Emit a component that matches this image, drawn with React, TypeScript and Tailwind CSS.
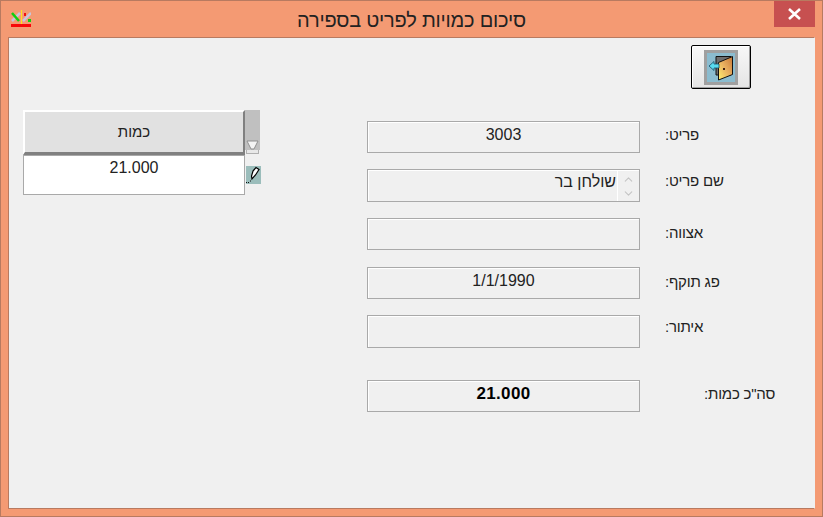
import { ChevronDown, ChevronUp } from 'lucide-react'

function AppIcon() {
  return (
    <svg width="20" height="17" viewBox="0 0 20 17" className="shrink-0">
      <path d="M1 11 L9 3" stroke="#c8c4dc" strokeWidth="2.5" />
      <path d="M1 3 L8 11" stroke="#10d010" strokeWidth="2.5" />
      <path d="M12 11 L20 3" stroke="#c8c4dc" strokeWidth="2.5" />
      <rect x="13" y="3" width="2" height="3" fill="#f01010" />
      <rect x="17" y="9" width="3" height="3" fill="#10d010" />
      <rect x="10" y="0" width="1" height="14" fill="#ffe020" />
      <rect x="0" y="14" width="20" height="3" fill="#f80808" />
    </svg>
  )
}

function DoorIcon() {
  return (
    <svg width="34" height="35" viewBox="0 0 34 35" className="-ml-[1px]">
      <defs>
        <linearGradient id="door" x1="0" y1="1" x2="1" y2="0">
          <stop offset="0" stopColor="#fff070" />
          <stop offset="0.5" stopColor="#e8b060" />
          <stop offset="1" stopColor="#c87838" />
        </linearGradient>
      </defs>
      <rect x="1.5" y="1.5" width="31" height="32" fill="#8bbccf" stroke="#a0a0a0" strokeWidth="3" />
      <path d="M12 6.5 H27 V25 H12 Z" fill="#6e6e6e" stroke="#111" strokeWidth="1" />
      <path d="M14.5 12.5 L28.5 6.5 V24.5 L14.5 30 Z" fill="url(#door)" stroke="#111" strokeWidth="1" />
      <path d="M5 16 L10 11.5 V14 H15 V18 H10 V20.5 Z" fill="#58dcf0" stroke="#14506a" strokeWidth="0.8" />
      <rect x="19" y="18" width="2" height="2" fill="#402010" />
    </svg>
  )
}

function PencilIcon() {
  return (
    <svg width="15" height="18" viewBox="0 0 15 18">
      <rect width="15" height="18" fill="#9bbdbb" />
      <path d="M7 5 L10 1.5 L13 3.5 L9.5 9 L6 13 L5.5 10 Z" fill="#fff" stroke="#000" strokeWidth="1.2" />
      <path d="M0 16.5 H3 M4 15 H5" stroke="#111" strokeWidth="1" strokeDasharray="1 1" />
    </svg>
  )
}

function Field({
  label,
  value,
  bold,
  spinner,
  h = 'h-8',
  labelClass = 'ml-[25px] pt-1',
}: {
  label: string
  value?: string
  bold?: boolean
  spinner?: boolean
  h?: string
  labelClass?: string
}) {
  return (
    <div className="flex items-start">
      <div
        className={`${h} w-[273px] flex border border-[#a9a9a9] shadow-[inset_1px_1px_0_#fff] text-[#222] ${
          bold ? 'font-bold text-black text-[17px] leading-[20px] tracking-[0.35px]' : 'text-[16px] leading-[20px]'
        }`}
      >
        {spinner ? (
          <>
            <div dir="rtl" className="flex-1 text-right pt-[2px] pr-[1px]">
              {value}
            </div>
            <div className="w-[22px] flex flex-col items-center pt-[3px] border-l border-white text-[#c4c4c4]">
              <ChevronUp size={13} strokeWidth={2} />
              <ChevronDown size={13} strokeWidth={2} className="mt-[1px]" />
            </div>
          </>
        ) : (
          <div className="flex-1 text-center pt-[3px]">{value}</div>
        )}
      </div>
      <div dir="rtl" className={`${labelClass} text-[15px] leading-[20px] tracking-[-0.2px] text-[#222] whitespace-nowrap`}>
        {label}
      </div>
    </div>
  )
}

export default function App() {
  return (
    <div className="w-[823px] h-[517px] flex flex-col bg-[#f49a73] border border-[#b87a60] font-['Liberation_Sans',sans-serif]">
      {/* Title bar */}
      <div className="h-[36px] shrink-0 flex items-start relative">
        <div className="pl-[10px] pt-[9px]">
          <AppIcon />
        </div>
        <div dir="rtl" className="absolute left-0 right-0 top-[7px] text-center text-[20px] leading-[24px] text-[#222] tracking-[-0.2px]">
          סיכום כמויות לפריט בספירה
        </div>
        <div className="ml-auto mr-[7px] w-[41px] h-[26px] bg-[#c75050] flex items-center justify-center">
          <svg width="15" height="12" viewBox="0 0 15 12">
            <path d="M2 1 L13 11 M13 1 L2 11" stroke="#fff" strokeWidth="2.6" />
          </svg>
        </div>
      </div>

      {/* Client area */}
      <div className="mx-[7px] h-[472px] bg-[#f0f0f0] border-t border-l border-r border-b border-[#b87a60] border-r-[#f0f0f0] flex flex-col">
        <div className="flex justify-end pt-[7px] pr-[63px]">
          <button className="w-[60px] h-[44px] flex items-center justify-center bg-gradient-to-b from-[#f8f8f8] to-[#e4e4e4] border border-black rounded-[2px] shadow-[inset_1px_1px_0_#fff,inset_-1px_-1px_0_#a0a0a0]">
            <DoorIcon />
          </button>
        </div>

        <div className="flex pt-[21px] pl-[14px]">
          {/* Quantity grid */}
          <div className="w-[238px] shrink-0 flex flex-col">
            <div className="flex">
              <div
                dir="rtl"
                className="w-[222px] h-[45px] flex items-center justify-center bg-[#e1e1e1] border-t-2 border-l-2 border-white border-b-[3px] border-b-[#808080] border-r-2 border-r-[#808080] text-[15px] text-[#222]"
              >
                כמות
              </div>
              <div className="w-[15px] flex flex-col">
                <div className="h-[40px] bg-[#c0c0c0] flex items-end justify-center">
                  <svg width="13" height="10" viewBox="0 0 13 10">
                    <path d="M1 1 H12 L8 9 H5 Z" fill="#f4f4f4" stroke="#909090" strokeWidth="1" />
                  </svg>
                </div>
                <div className="h-[4px] w-[13px] ml-[1px] border border-t-0 border-[#b0b0b0] bg-[#e8e8e8]" />
              </div>
            </div>
            <div className="flex">
              <div className="w-[222px] h-[40px] bg-white border border-[#a9a9a9] pt-[2px] text-center text-[16px] leading-[20px] text-[#222]">
                21.000
              </div>
              <div className="pt-[11px] pl-[1px]">
                <PencilIcon />
              </div>
            </div>
          </div>

          {/* Item fields */}
          <div className="ml-[106px] pt-[11px] flex flex-col">
            <Field label="פריט:" value="3003" />
            <div className="mt-4">
              <Field label="שם פריט:" value="שולחן בר" spinner h="h-[33px]" labelClass="ml-[25px] pt-[2px]" />
            </div>
            <div className="mt-4">
              <Field label="אצווה:" h="h-[32px]" labelClass="ml-[25px] pt-[5px]" />
            </div>
            <div className="mt-[17px]">
              <Field label="פג תוקף:" value="1/1/1990" labelClass="ml-[25px] pt-[5px]" />
            </div>
            <div className="mt-4">
              <Field label="איתור:" h="h-[33px]" labelClass="ml-[25px] pt-[2px]" />
            </div>
            <div className="mt-8">
              <Field label={'סה"כ כמות:'} value="21.000" bold labelClass="ml-[64px] pt-[4px]" />
            </div>
          </div>
        </div>
      </div>
    </div>
  )
}
